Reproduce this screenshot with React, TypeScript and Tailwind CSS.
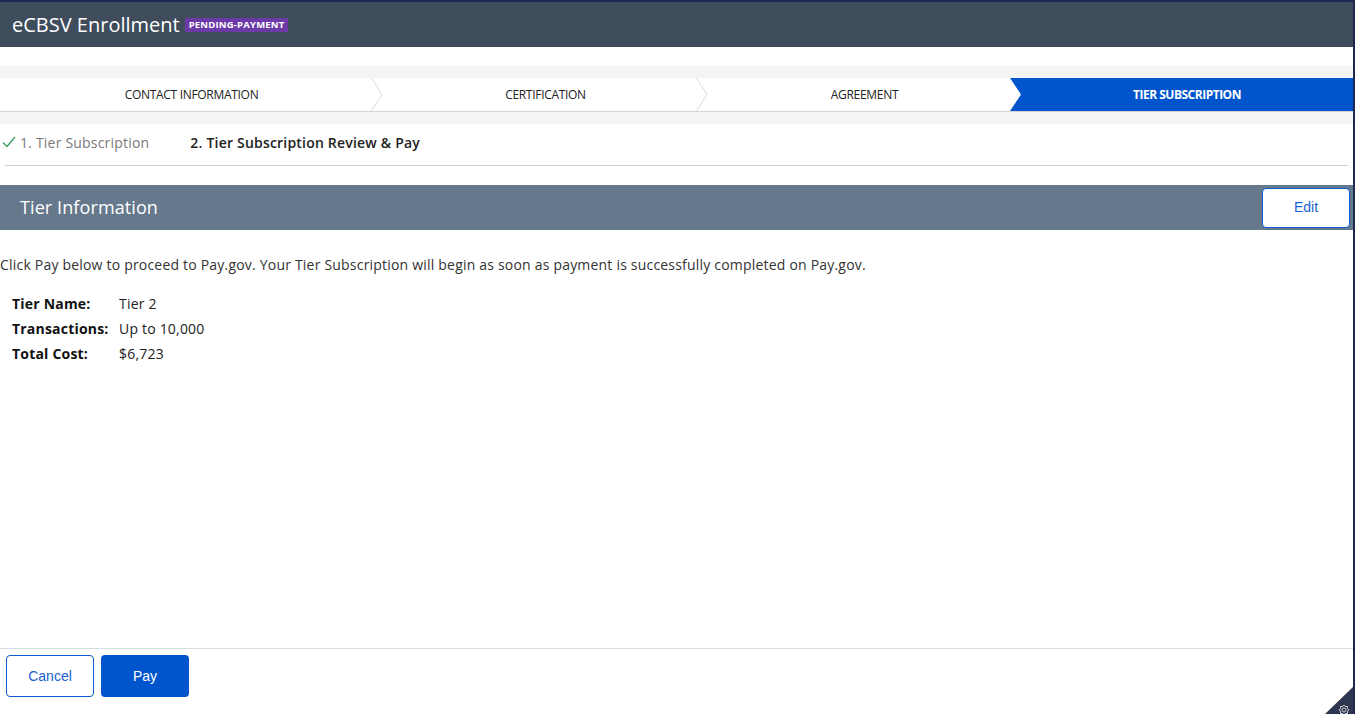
import React from "react";

const font = { fontFamily: '"Open Sans", "Liberation Sans", sans-serif' };

function Chevron() {
  return (
    <svg className="absolute right-0 top-0" width="12" height="33" viewBox="0 0 12 33">
      <polyline points="0.5,0 11,16.5 0.5,33" fill="none" stroke="#d9d9d9" strokeWidth="1" />
    </svg>
  );
}

export default function App() {
  return (
    <div
      className="relative w-full h-[714px] overflow-hidden bg-white border-t-2 border-r-2 border-[#1f2852] flex flex-col"
      style={font}
    >
      {/* Header */}
      <div className="h-[45px] bg-[#3e4c5c] flex items-center pl-3 gap-[5px] shrink-0">
        <span className="text-white text-[20px] leading-none">eCBSV Enrollment</span>
        <span className="bg-[#6c3aa6] text-white text-[9.5px] font-bold leading-[14px] px-[4px] tracking-[0.2px] mt-[1px]">
          PENDING-PAYMENT
        </span>
      </div>

      <div className="h-[19px] shrink-0" />

      {/* Steps */}
      <div className="bg-[#f4f4f4] pt-[12px] pb-[12px] shrink-0">
        <div className="flex h-[34px] bg-white border-b border-[#d4d4d4] text-[12px] text-[#222] tracking-[-0.3px]">
          <div className="relative w-[383px] flex items-center justify-center pt-[1px]">
            CONTACT INFORMATION
            <Chevron />
          </div>
          <div className="relative w-[325px] flex items-center justify-center pt-[1px]">
            CERTIFICATION
            <Chevron />
          </div>
          <div className="relative w-[302px] flex items-center justify-center pl-[11px] pt-[1px]">AGREEMENT</div>
          <div
            className="flex-1 bg-[#0055cc] text-white font-bold flex items-center justify-center pl-[11px] pt-[1px] tracking-[-0.5px]"
            style={{ clipPath: "polygon(0 0, 100% 0, 100% 100%, 0 100%, 11px 50%)" }}
          >
            TIER SUBSCRIPTION
          </div>
        </div>
      </div>

      {/* Sub steps */}
      <div className="h-[41px] flex items-center text-[14px] tracking-[0.2px] pb-[5px] shrink-0">
        <svg className="ml-[2px]" width="14" height="12" viewBox="0 0 14 12">
          <polyline points="1,6.5 5,10.5 13,1" fill="none" stroke="#3d9b62" strokeWidth="1.3" />
        </svg>
        <span className="ml-[4px] text-[#7a7a7a]">1. Tier Subscription</span>
        <span className="ml-[41px] text-[#222] font-semibold">2. Tier Subscription Review &amp; Pay</span>
      </div>
      <div className="mx-[5px] border-t border-[#cfcfcf] shrink-0" />

      <div className="h-[19px] shrink-0" />

      {/* Tier information bar */}
      <div className="h-[45px] bg-[#66788b] flex items-center justify-between pl-5 pr-[3px] shrink-0">
        <span className="text-white text-[18px] tracking-[0.1px]">Tier Information</span>
        <button
          className="w-[88px] h-[40px] bg-white border border-[#0b5ccf] rounded-[4px] text-[#1a5fd0] text-[14px]"
          style={{ fontFamily: '"Liberation Sans", Arial, sans-serif' }}
        >
          Edit
        </button>
      </div>

      {/* Content */}
      <div className="flex-1 text-[14px] text-[#333] tracking-[0.2px]">
        <p className="mt-[25px] leading-[20px]">
          Click Pay below to proceed to Pay.gov. Your Tier Subscription will begin as soon as payment is successfully completed on Pay.gov.
        </p>
        <div className="mt-[16px] pl-3 text-[#222]">
          {[
            ["Tier Name:", "Tier 2"],
            ["Transactions:", "Up to 10,000"],
            ["Total Cost:", "$6,723"],
          ].map(([k, v]) => (
            <div key={k} className="flex h-[25px] items-center">
              <span className="w-[107px] font-bold text-[#111]">{k}</span>
              <span>{v}</span>
            </div>
          ))}
        </div>
      </div>

      {/* Footer */}
      <div className="border-t border-[#d3dbe3] h-[66px] shrink-0 flex items-start gap-[7px] pl-[6px] pt-[6px]">
        <button
          className="w-[88px] h-[42px] bg-white border border-[#0b5ccf] rounded-[4px] text-[#1a5fd0] text-[14px]"
          style={{ fontFamily: '"Liberation Sans", Arial, sans-serif' }}
        >
          Cancel
        </button>
        <button
          className="w-[88px] h-[42px] bg-[#0055cc] rounded-[4px] text-white text-[14px]"
          style={{ fontFamily: '"Liberation Sans", Arial, sans-serif' }}
        >
          Pay
        </button>
      </div>

      {/* Corner resize widget */}
      <svg className="absolute right-0 bottom-0" width="28" height="27" viewBox="0 0 28 27">
        <polygon points="28,0 28,27 0,27" fill="#2e3650" />
        <g transform="translate(19,23)" fill="none" stroke="#c9ccd6" strokeWidth="1">
          <circle r="2" />
          <path d="M0,-5 L1.2,-3.5 L3.5,-3.5 L3.5,-1.2 L5,0 L3.5,1.2 L3.5,3.5 L1.2,3.5 L0,5 L-1.2,3.5 L-3.5,3.5 L-3.5,1.2 L-5,0 L-3.5,-1.2 L-3.5,-3.5 L-1.2,-3.5 Z" />
        </g>
      </svg>
    </div>
  );
}
